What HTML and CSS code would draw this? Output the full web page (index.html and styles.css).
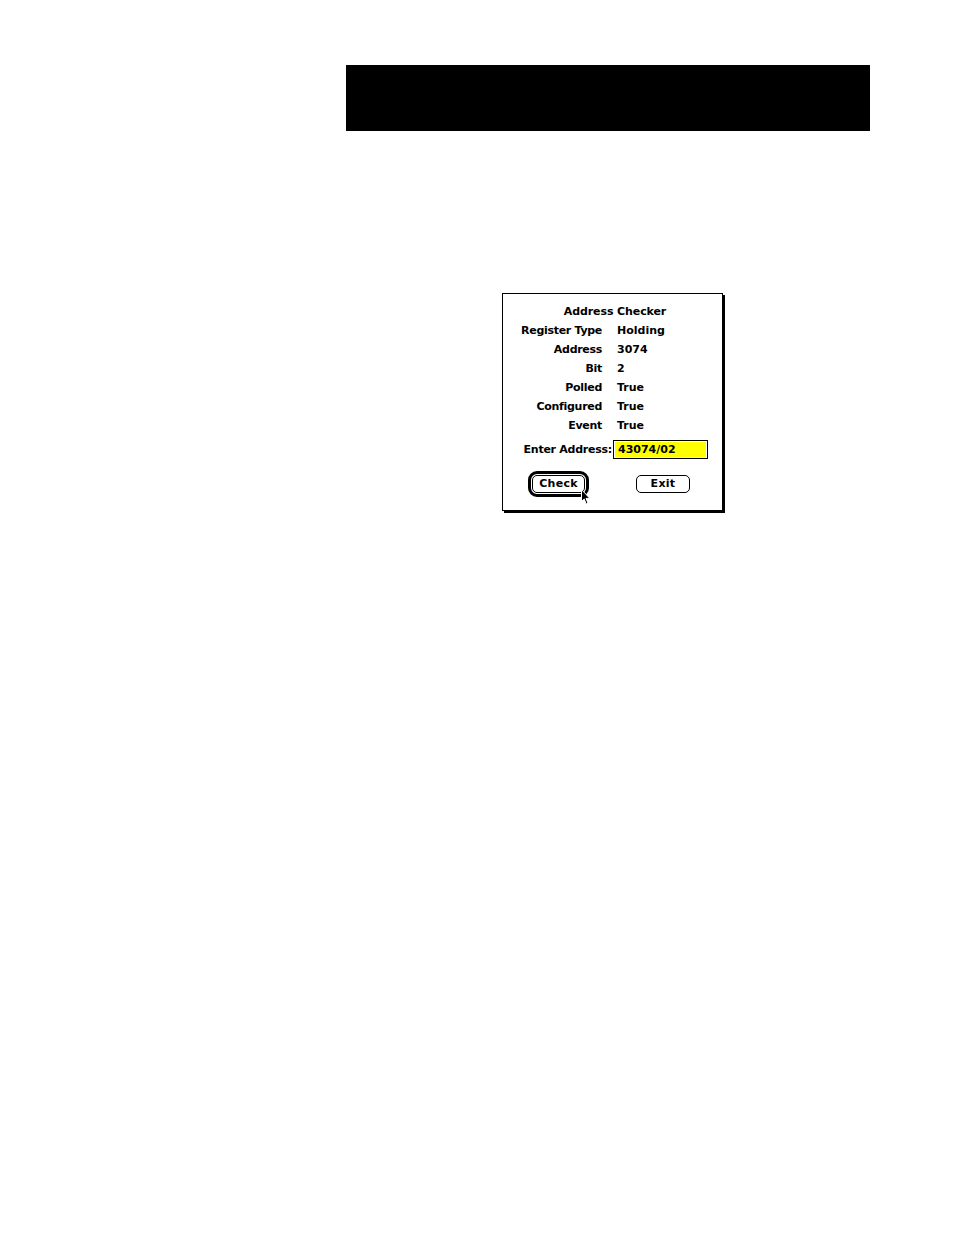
FILE: index.html
```
<!DOCTYPE html>
<html>
<head>
<meta charset="utf-8">
<link rel="stylesheet" href="styles.css">
</head>
<body>
<div class="page">
  <div class="header-bar"></div>
  <div class="dialog">
    <div class="title">Address Checker</div>
    <div class="info">
      <div class="lbl">Register Type</div><div class="val">Holding</div>
      <div class="lbl">Address</div><div class="val">3074</div>
      <div class="lbl">Bit</div><div class="val">2</div>
      <div class="lbl">Polled</div><div class="val">True</div>
      <div class="lbl">Configured</div><div class="val">True</div>
      <div class="lbl">Event</div><div class="val">True</div>
    </div>
    <div class="entry">
      <span class="entry-lbl">Enter Address:</span>
      <div class="field"><div class="field-sel">43074/02</div></div>
    </div>
    <div class="buttons">
      <div class="default-ring"><div class="btn">Check</div></div>
      <div class="btn">Exit</div>
      <svg class="cursor" width="10" height="16" viewBox="0 0 10 16">
        <path d="M0.5 0.5 L0.5 12.5 L3.2 10 L5.2 15 L7 14.2 L5 9.4 L8.8 9.4 Z" fill="#000" stroke="#fff" stroke-width="1"/>
      </svg>
    </div>
  </div>
</div>
</body>
</html>
```

FILE: styles.css
```
html, body {
  margin: 0;
  padding: 0;
  background: #fff;
}
.page {
  width: 954px;
  height: 1235px;
  padding-top: 65px;
  box-sizing: border-box;
  font-family: "DejaVu Sans", "Liberation Sans", sans-serif;
  font-weight: bold;
  font-size: 11px;
  color: #000;
}
.header-bar {
  margin-left: 346px;
  width: 524px;
  height: 66px;
  background: #000;
}
.dialog {
  margin-top: 162px;
  margin-left: 502px;
  width: 219px;
  border: 1px solid #000;
  box-shadow: 2px 2px 0 #000;
  padding: 8px 0 13px 0;
  box-sizing: content-box;
}
.title {
  text-align: center;
  line-height: 19px;
  height: 19px;
  padding-left: 5px;
  letter-spacing: -0.1px;
}
.info {
  display: grid;
  grid-template-columns: 99px 1fr;
  column-gap: 15px;
  line-height: 19px;
}
.lbl {
  text-align: right;
  letter-spacing: -0.3px;
  white-space: nowrap;
}
.val {
  white-space: nowrap;
}
.entry {
  display: flex;
  justify-content: flex-end;
  align-items: center;
  margin-top: 5px;
  padding-right: 14px;
  height: 19px;
}
.entry-lbl {
  letter-spacing: -0.25px;
  white-space: nowrap;
}
.field {
  margin-left: 1px;
  width: 95px;
  height: 19px;
  border: 1px solid #000;
  padding: 1px;
  box-sizing: border-box;
  background: #fff;
}
.field-sel {
  height: 100%;
  background: #ffff00;
  line-height: 15px;
  padding-left: 3px;
}
.buttons {
  position: relative;
  display: flex;
  align-items: center;
  margin-top: 12px;
  padding-left: 25px;
  gap: 47px;
}
.default-ring {
  border: 3px solid #000;
  border-radius: 9px;
  padding: 1px;
}
.btn {
  width: 54px;
  height: 18px;
  box-sizing: border-box;
  border: 1px solid #000;
  border-radius: 5px;
  text-align: center;
  line-height: 16px;
  letter-spacing: 0.3px;
}
.default-ring .btn {
  width: 53px;
}
.cursor {
  position: absolute;
  left: 78px;
  top: 18px;
}
```
